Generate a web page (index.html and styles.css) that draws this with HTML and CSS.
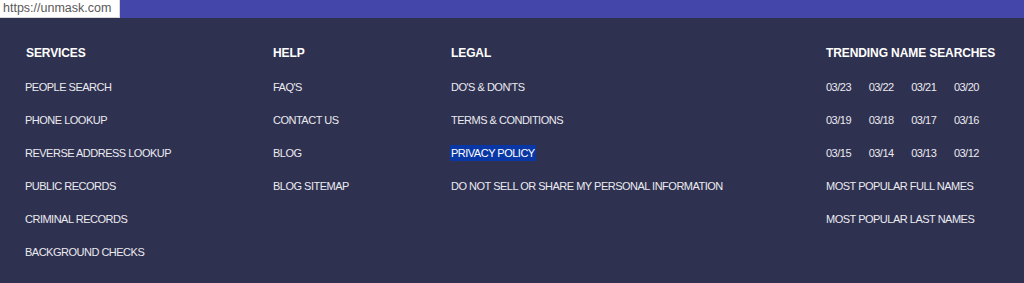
FILE: index.html
```html
<!DOCTYPE html>
<html>
<head>
<meta charset="utf-8">
<link rel="stylesheet" href="styles.css">
</head>
<body>
<div class="topbar"><span class="url">https://unmask.com</span></div>
<footer class="footer">
  <div class="col">
    <h3 class="heading heading-first">SERVICES</h3>
    <a class="link">PEOPLE SEARCH</a>
    <a class="link">PHONE LOOKUP</a>
    <a class="link">REVERSE ADDRESS LOOKUP</a>
    <a class="link">PUBLIC RECORDS</a>
    <a class="link">CRIMINAL RECORDS</a>
    <a class="link">BACKGROUND CHECKS</a>
  </div>
  <div class="col">
    <h3 class="heading">HELP</h3>
    <a class="link">FAQ'S</a>
    <a class="link">CONTACT US</a>
    <a class="link">BLOG</a>
    <a class="link">BLOG SITEMAP</a>
  </div>
  <div class="col">
    <h3 class="heading">LEGAL</h3>
    <a class="link">DO'S &amp; DON'TS</a>
    <a class="link">TERMS &amp; CONDITIONS</a>
    <a class="link"><span class="selected">PRIVACY POLICY</span></a>
    <a class="link">DO NOT SELL OR SHARE MY PERSONAL INFORMATION</a>
  </div>
  <div class="col">
    <h3 class="heading">TRENDING NAME SEARCHES</h3>
    <div class="dates">
      <a class="date">03/23</a><a class="date">03/22</a><a class="date">03/21</a><a class="date">03/20</a>
    </div>
    <div class="dates">
      <a class="date">03/19</a><a class="date">03/18</a><a class="date">03/17</a><a class="date">03/16</a>
    </div>
    <div class="dates">
      <a class="date">03/15</a><a class="date">03/14</a><a class="date">03/13</a><a class="date">03/12</a>
    </div>
    <a class="link">MOST POPULAR FULL NAMES</a>
    <a class="link">MOST POPULAR LAST NAMES</a>
  </div>
</footer>
</body>
</html>
```
FILE: styles.css
```css
html, body {
  margin: 0;
  padding: 0;
  height: 283px;
  overflow: hidden;
  background: #2f3151;
}
body {
  font-family: "Liberation Sans", Arial, sans-serif;
}
.topbar {
  height: 18px;
  background: #4447a9;
  display: flex;
  align-items: flex-start;
}
.url {
  display: block;
  height: 17px;
  width: 116px;
  padding-left: 3px;
  background: #ffffff;
  color: #5a5a5a;
  font-family: "Liberation Sans", Arial, sans-serif;
  font-size: 12.5px;
  line-height: 17px;
  white-space: nowrap;
  overflow: hidden;
  border-right: 1px solid #d8d8d8;
  border-bottom: 1px solid #d8d8d8;
}
.footer {
  display: grid;
  grid-template-columns: 248px 178px 375px 1fr;
  padding: 18px 0 0 25px;
}
.col {
  display: flex;
  flex-direction: column;
  align-items: flex-start;
}
.heading {
  margin: 0 0 1px 0;
  font-size: 12px;
  font-weight: bold;
  color: #ffffff;
  line-height: 34px;
  letter-spacing: -0.1px;
}
.heading-first {
  padding-left: 1px;
}
.link, .date {
  display: block;
  font-size: 11px;
  line-height: 33px;
  color: #ebebef;
  letter-spacing: -0.5px;
  white-space: nowrap;
}
.dates {
  display: flex;
  gap: 17.6px;
}
.selected {
  display: inline-block;
  background: #0a37a6;
  line-height: 16px;
  padding: 0 1px 0 1px;
  margin-left: -1px;
  color: #ffffff;
}
```
